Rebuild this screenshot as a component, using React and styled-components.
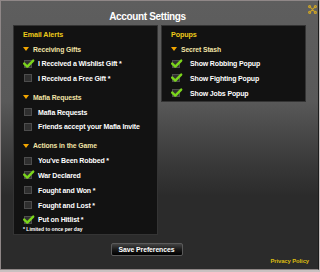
import React from "react";
import styled, { createGlobalStyle } from "styled-components";

const Global = createGlobalStyle`
  html, body { margin: 0; padding: 0; background: #c9c0c0; }
  body { font-family: "Liberation Sans", Arial, sans-serif; }
`;

const Dialog = styled.div`
  position: relative;
  box-sizing: border-box;
  width: 319px;
  height: 270px;
  border: 1px solid #8f8787;
  border-right-color: #1c1c1c;
  background: linear-gradient(
    to bottom,
    #5e5e5e 0px,
    #595959 100px,
    #3a3a3a 160px,
    #2b2b2b 195px,
    #2b2b2b 100%
  );
  display: flex;
  flex-direction: column;
  padding: 0 9px 0 12px;
`;

const Title = styled.h1`
  margin: 0;
  padding: 10px 27px 0 0;
  height: 24px;
  box-sizing: border-box;
  line-height: 12px;
  font-size: 10px;
  letter-spacing: -0.35px;
  font-weight: bold;
  color: #ffffff;
  text-align: center;
`;

const Close = styled.button`
  position: absolute;
  top: 4px;
  right: 1px;
  width: 9px;
  height: 9px;
  padding: 0;
  border: 0;
  background: none;
  display: flex;
`;

const Columns = styled.div`
  display: flex;
  gap: 3px;
  align-items: flex-start;
`;

const Panel = styled.section`
  box-sizing: border-box;
  width: 145px;
  background: #121212;
  border: 1px solid #343434;
  padding: 2.3px 0 ${(p) => p.$bottom || 0}px 0;
  display: flex;
  flex-direction: column;
`;

const Heading = styled.h2`
  margin: 0;
  padding-left: 9px;
  line-height: 13.4px;
  font-size: 7.2px;
  letter-spacing: -0.1px;
  font-weight: bold;
  color: #ecca1a;
`;

const Group = styled.div`
  display: flex;
  flex-direction: column;
  & + & {
    margin-top: 4.3px;
  }
`;

const SubHeading = styled.div`
  display: flex;
  align-items: center;
  gap: 4px;
  padding-left: 9px;
  height: 14.6px;
  font-size: 6.8px;
  letter-spacing: -0.1px;
  font-weight: bold;
  color: #f1e3a6;
`;

const Arrow = styled.span`
  width: 0;
  height: 0;
  border-left: 3px solid transparent;
  border-right: 3px solid transparent;
  border-top: 4px solid #f2a600;
`;

const Row = styled.label`
  display: flex;
  align-items: center;
  gap: ${(p) => p.$gap}px;
  padding-left: 10px;
  height: 14.8px;
  font-size: 7px;
  letter-spacing: -0.15px;
  font-weight: bold;
  color: #ffffff;
`;

const Box = styled.span`
  position: relative;
  flex: none;
  box-sizing: border-box;
  width: 8px;
  height: 8px;
  background: #2f2f2f;
  border: 1px solid #4d4d4d;
`;

const Tick = styled.svg`
  position: absolute;
  left: -2px;
  top: -1px;
  width: 11px;
  height: 8px;
  overflow: visible;
`;

const Note = styled.div`
  margin-top: -1.5px;
  padding-left: 9px;
  line-height: 6px;
  font-size: 5px;
  font-weight: bold;
  color: #ffffff;
`;

const Footer = styled.div`
  display: flex;
  justify-content: center;
  padding-right: 29px;
  margin-top: 8px;
`;

const SaveButton = styled.button`
  box-sizing: border-box;
  width: 72px;
  height: 13px;
  padding: 0;
  border: 1px solid #5a5a5a;
  border-radius: 2px;
  background: linear-gradient(to bottom, #444 0%, #1a1a1a 50%, #000 100%);
  color: #fff;
  font-family: "Liberation Sans", Arial, sans-serif;
  font-size: 6.9px;
  letter-spacing: -0.1px;
  font-weight: bold;
  line-height: 11px;
`;

const Privacy = styled.a`
  align-self: flex-end;
  margin-top: 1px;
  line-height: 8px;
  font-size: 5.9px;
  font-weight: bold;
  letter-spacing: -0.1px;
  color: #dcbc10;
  text-decoration: none;
`;

function CheckItem({ label, checked, gap }) {
  return (
    <Row $gap={gap}>
      <Box>
        {checked && (
          <Tick viewBox="0 0 11 8">
            <path
              d="M1.2 3.6 L4.3 6.6 L10.2 0.6"
              fill="none"
              stroke="#7bd51c"
              strokeWidth="2.4"
              strokeLinecap="round"
              strokeLinejoin="round"
            />
          </Tick>
        )}
      </Box>
      {label}
    </Row>
  );
}

function Section({ title, items, gap }) {
  return (
    <Group>
      <SubHeading>
        <Arrow />
        {title}
      </SubHeading>
      {items.map(([label, checked]) => (
        <CheckItem key={label} label={label} checked={checked} gap={gap} />
      ))}
    </Group>
  );
}

const emailGroups = [
  {
    title: "Receiving Gifts",
    items: [
      ["I Received a Wishlist Gift *", true],
      ["I Received a Free Gift *", false],
    ],
  },
  {
    title: "Mafia Requests",
    items: [
      ["Mafia Requests", false],
      ["Friends accept your Mafia Invite", false],
    ],
  },
  {
    title: "Actions in the Game",
    items: [
      ["You've Been Robbed *", false],
      ["War Declared", true],
      ["Fought and Won *", false],
      ["Fought and Lost *", false],
      ["Put on Hitlist *", true],
    ],
  },
];

const popupGroups = [
  {
    title: "Secret Stash",
    items: [
      ["Show Robbing Popup", true],
      ["Show Fighting Popup", true],
      ["Show Jobs Popup", true],
    ],
  },
];

export default function App() {
  return (
    <>
      <Global />
      <Dialog>
        <Title>Account Settings</Title>
        <Close aria-label="Close">
          <svg viewBox="0 0 9 9" width="9" height="9">
            <g fill="none" stroke="#c9a227" strokeWidth="1.2" strokeLinecap="round">
              <path d="M2.2 2.2 L6.8 6.8 M6.8 2.2 L2.2 6.8" />
              <circle cx="1.6" cy="1.6" r="1" />
              <circle cx="7.4" cy="1.6" r="1" />
              <circle cx="1.6" cy="7.4" r="1" />
              <circle cx="7.4" cy="7.4" r="1" />
            </g>
          </svg>
        </Close>
        <Columns>
          <Panel $bottom={2}>
            <Heading>Email Alerts</Heading>
            {emailGroups.map((g) => (
              <Section key={g.title} title={g.title} items={g.items} gap={6} />
            ))}
            <Note>* Limited to once per day</Note>
          </Panel>
          <Panel>
            <Heading>Popups</Heading>
            {popupGroups.map((g) => (
              <Section key={g.title} title={g.title} items={g.items} gap={10} />
            ))}
          </Panel>
        </Columns>
        <Footer>
          <SaveButton>Save Preferences</SaveButton>
        </Footer>
        <Privacy href="#">Privacy Policy</Privacy>
      </Dialog>
    </>
  );
}
